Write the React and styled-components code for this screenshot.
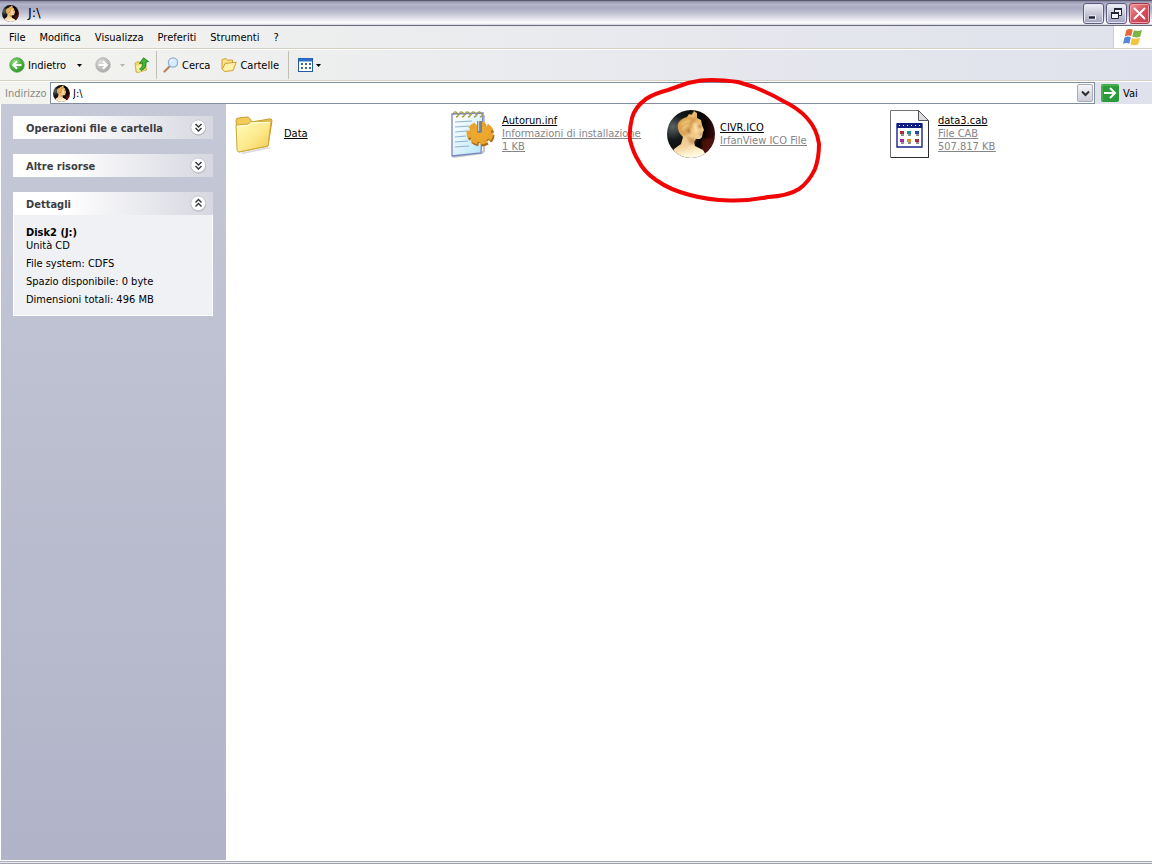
import React, { useId } from "react";
import styled, { createGlobalStyle } from "styled-components";

const GlobalStyle = createGlobalStyle`
  * { box-sizing: border-box; }
  body {
    margin: 0;
    background: #fff;
    color: #000;
    font-family: "DejaVu Sans Condensed", "Liberation Sans", sans-serif;
    font-size: 11px;
    line-height: 13px;
  }
  button, input {
    font: inherit;
    color: inherit;
    border: 0;
    margin: 0;
    padding: 0;
    background: none;
  }
  svg { display: block; flex: none; }
  h1, h2, p, dl, dd { margin: 0; }
`;

const Window = styled.div`
  display: flex;
  flex-direction: column;
  min-height: 100vh;
  overflow: hidden;
`;

const TitleBar = styled.header`
  display: flex;
  align-items: center;
  gap: 9px;
  height: 26px;
  padding: 0 2px;
  border-top: 1px solid #5c5870;
  border-bottom: 1px solid #6d6a80;
  background: linear-gradient(#8c8ba6 0, #b4b4ca 3px, #a9a9c2 7px, #c6c6d6 13px, #f2f2f6 20px, #fff 22px, #d0d0dc 24px);
`;

const WindowTitle = styled.h1`
  flex: 1;
  font-family: "DejaVu Sans", sans-serif;
  font-size: 13px;
  font-weight: 400;
  line-height: 16px;
`;

const WindowButtons = styled.div`
  display: flex;
  gap: 2px;
`;

const WindowButton = styled.button`
  display: grid;
  place-items: center;
  width: 21px;
  height: 21px;
  border: 1px solid ${(p) => (p.$close ? "#a33a4c" : "#5d5c80")};
  border-radius: 3px;
  box-shadow: inset 0 0 0 1px ${(p) => (p.$close ? "#f0a0a8" : "#e4e4f0")};
  background: ${(p) =>
    p.$close
      ? "linear-gradient(135deg, #ec9a9e, #d8525c 50%, #c03c4c)"
      : "linear-gradient(#f0f0f6, #c4c4d6 55%, #a2a2be)"};
`;

const Bar = styled.div`
  display: flex;
  align-items: center;
  background: linear-gradient(90deg, #f3f3ef, #e9eaee 50%, #dfe1ec);
`;

const MenuBar = styled(Bar)`
  height: 23px;
  padding-left: 2px;
  border-bottom: 1px solid #d5d2c3;
`;

const MenuItem = styled.button`
  height: 22px;
  padding: 0 7px;
`;

const Brand = styled.div`
  display: grid;
  place-items: center;
  width: 39px;
  height: 22px;
  margin-left: auto;
  border-left: 1px solid #d5d2c3;
  background: #fff;
`;

const ToolBar = styled(Bar)`
  height: 32px;
  padding-left: 9px;
  border-top: 1px solid #fff;
  border-bottom: 1px solid #d5d2c3;
`;

const ToolButton = styled.button`
  display: flex;
  align-items: center;
  gap: 3px;
  height: 24px;
  margin-right: ${(p) => p.$after || 0}px;
`;

const Divider = styled.div`
  width: 1px;
  height: 28px;
  margin: 0 ${(p) => p.$gap}px;
  background: #c2c0b6;
`;

const AddressBar = styled(Bar)`
  height: 23px;
  padding-left: 5px;
  border-top: 1px solid #fff;
`;

const AddressLabel = styled.label`
  width: 45px;
  color: #8a8a88;
`;

const Combo = styled.div`
  display: flex;
  flex: 1;
  align-items: center;
  height: 22px;
  padding: 1px 1px 1px 2px;
  border: 1px solid #7f8fa0;
  background: #fff;
`;

const AddressInput = styled.input`
  flex: 1;
  min-width: 0;
  height: 18px;
  padding: 1px 3px 0;
  outline: 0;
`;

const DropButton = styled.button`
  display: grid;
  place-items: center;
  width: 16px;
  height: 18px;
  border: 1px solid #a9aabc;
  border-radius: 2px;
  background: linear-gradient(#f4f4f8, #cccdd8);
`;

const GoButton = styled.button`
  display: flex;
  align-items: center;
  gap: 4px;
  width: 57px;
  height: 22px;
  padding-left: 6px;
`;

const Body = styled.div`
  display: flex;
  flex: 1;
  margin-left: 1px;
`;

const Sidebar = styled.aside`
  display: flex;
  flex-direction: column;
  gap: 15px;
  width: 225px;
  padding: 12px 13px 12px 12px;
  background: linear-gradient(#c5c8d6, #b1b3c8);
`;

const PanelHeader = styled.button`
  display: flex;
  align-items: center;
  justify-content: space-between;
  width: 100%;
  height: 23px;
  padding: 2px 6px 0 13px;
  color: #3c3d42;
  font-weight: 700;
  background: linear-gradient(90deg, #fff 25%, #d6d7e0);
`;

const PanelBody = styled.div`
  height: 101px;
  padding: 11px 12px 0;
  border: 1px solid #fff;
  border-top: 0;
  background: #eff1f5;
`;

const Detail = styled.p`
  margin-bottom: ${(p) => (p.$tight ? 0 : 5)}px;
  font-weight: ${(p) => (p.$strong ? 700 : 400)};
`;

const Files = styled.main`
  display: grid;
  flex: 1;
  grid-template-columns: repeat(auto-fill, 218px);
  align-content: start;
  padding: 6px 0 6px 5px;
  background: #fff;
`;

const FileItem = styled.div`
  position: relative;
  display: flex;
  align-items: center;
  gap: 5px;
  height: 48px;
`;

const FileText = styled.a`
  padding-bottom: 1px;
  color: #000;
  white-space: nowrap;
`;

const FileNote = styled.span`
  display: block;
  color: #85858a;
  text-decoration: underline;
`;

const Marker = styled.svg`
  position: absolute;
  z-index: 2;
  top: -34px;
  left: -41px;
  pointer-events: none;
`;

const StatusEdge = styled.footer`
  height: 4px;
  border-top: 1px solid #fff;
  border-bottom: 1px solid #9fa1ad;
  background: linear-gradient(#a9aabb 50%, #eeeef2 50%);
`;

function Portrait({ size }) {
  const id = useId();
  return (
    <svg width={size} height={size} viewBox="0 0 48 48" aria-hidden="true">
      <defs>
        <radialGradient id={id + "b"} cx=".12" cy=".35" r=".95">
          <stop offset="0" stopColor="#5a6466" />
          <stop offset=".28" stopColor="#15191a" />
          <stop offset=".7" stopColor="#060303" />
          <stop offset="1" stopColor="#4e0f0d" />
        </radialGradient>
        <linearGradient id={id + "s"} x1=".3" x2=".5" y1="0" y2="1">
          <stop offset="0" stopColor="#dfa650" />
          <stop offset=".4" stopColor="#f0c57f" />
          <stop offset=".7" stopColor="#f2d09a" />
          <stop offset=".88" stopColor="#fff3d2" />
          <stop offset="1" stopColor="#fffdf0" />
        </linearGradient>
        <filter id={id + "f"} x="-10%" y="-10%" width="120%" height="120%">
          <feGaussianBlur stdDeviation=".9" />
        </filter>
        <clipPath id={id + "c"}><circle cx="24" cy="24" r="24" /></clipPath>
      </defs>
      <g clipPath={`url(#${id}c)`}>
        <rect width="48" height="48" fill={`url(#${id}b)`} />
        <path d="M34 30Q45 26 48 30L44 42 36 42Z" fill="#5c1210" opacity=".7" filter={`url(#${id}f)`} />
        <path d="M2 50 7 39 14 34 16 27Q10 21 11 14Q13 9 20 7L22 4 25 5 27 1 30 3 30 8 34 10 35 15 37 20 36 22 35 27 33 29 29 29 27 32 28 36 36 40 42 50Z" fill={`url(#${id}s)`} />
        <g filter={`url(#${id}f)`}>
          <path d="M11 14Q13 9 21 8L29 7Q31 11 26 13L25 18 21 20 20 25 16 26Q9 20 11 14Z" fill="#c98a38" opacity=".6" />
          <path d="M14 15q4-4 9-4M16 20q1-4 6-5M25 7l2-4" fill="none" stroke="#f6d080" strokeWidth="2" />
          <path d="M20 26Q24 29 29 29L27 34 23 34Z" fill="#b9793a" opacity=".6" />
          <path d="M31 17l3-1M33 24h2M22 19q-1 3 1 4" fill="none" stroke="#8f5425" strokeWidth="1.6" />
          <path d="M27 14q3 3 2 9" fill="none" stroke="#ffe2a8" strokeWidth="3" />
        </g>
      </g>
    </svg>
  );
}

function ArrowDisc({ back }) {
  const id = useId();
  return (
    <svg width="16" height="16" viewBox="0 0 16 16" aria-hidden="true">
      <defs>
        <radialGradient id={id} cx=".35" cy=".3" r=".8">
          <stop offset="0" stopColor={back ? "#8fdc7c" : "#dededc"} />
          <stop offset="1" stopColor={back ? "#1e8f1c" : "#a4a5a5"} />
        </radialGradient>
      </defs>
      <circle cx="8" cy="8" r="7.2" fill={`url(#${id})`} stroke={back ? "#43a03c" : "#aaa"} strokeWidth=".8" />
      <path d={back ? "M12.5 8H4.5M8 4.2 4.2 8 8 11.8" : "M3.5 8h8M8 4.2 11.8 8 8 11.8"} fill="none" stroke="#fff" strokeWidth="2" />
    </svg>
  );
}

const Caret = ({ color = "#000" }) => (
  <svg width="5" height="3" viewBox="0 0 5 3" aria-hidden="true">
    <path d="M0 0h5L2.5 3Z" fill={color} />
  </svg>
);

const UpFolder = () => (
  <svg width="16" height="16" viewBox="0 0 16 16" aria-hidden="true">
    <path d="M1 6 4 4.5 6 5.5 11 4 12.5 13 4 15.5 2 15Z" fill="#f3d866" stroke="#c9a738" strokeWidth=".8" />
    <path d="M2 9 9 7 10.5 13 4 15Z" fill="#fdf3a4" />
    <path d="M5.5 12Q9 11 8.5 6L5.5 6.5 9.5 .8 14.5 4.5 12 5.2Q12.5 11.5 7.5 13.5Z" fill="#43b634" stroke="#17701a" strokeWidth=".8" />
  </svg>
);

const Magnifier = () => (
  <svg width="16" height="16" viewBox="0 0 16 16" aria-hidden="true">
    <path d="M6.5 9.5 1.5 14.5" stroke="#b9805a" strokeWidth="2.2" strokeLinecap="round" />
    <circle cx="10" cy="5.5" r="4.6" fill="#d6ecfb" stroke="#8fb0d4" strokeWidth="1.3" />
    <path d="M7.5 5q.5-2 2.5-2.3" fill="none" stroke="#fff" strokeWidth="1.3" />
  </svg>
);

const OpenFolder = () => (
  <svg width="16" height="16" viewBox="0 0 16 16" aria-hidden="true">
    <path d="M1 12V2.5L5 1.5 6.5 3.2 11.5 3V6" fill="#fbe28a" stroke="#d1a032" />
    <path d="M1.2 12.5 4 6.5 15.2 5.2 12 13.5 4 14.5Z" fill="#fff2a8" stroke="#d1a032" />
  </svg>
);

const ViewsIcon = () => (
  <svg width="15" height="14" viewBox="0 0 15 14" aria-hidden="true">
    <rect x=".5" y=".5" width="14" height="13" fill="#fff" stroke="#2459a8" />
    <path d="M1 2h13" stroke="#2f6fc9" strokeWidth="3" />
    <path d="M3 6h2M7 6h2M11 6h2M3 10h2M7 10h2M11 10h2" stroke="#3f6792" strokeWidth="2" />
  </svg>
);

const Flag = () => (
  <svg width="20" height="18" viewBox="0 0 20 18" aria-hidden="true">
    <path d="M3.3 2.2Q6-.1 9.7 1.7L8.2 8.1Q5 6.5 1.7 8.5Z" fill="#e4683a" />
    <path d="M10.9 2.2Q14.5 4 19 1.8L17.3 8.4Q13.5 10.3 9.3 8.6Z" fill="#7bb642" />
    <path d="M1.4 9.7Q4.6 7.7 7.9 9.4L6.3 15.8Q3 14.2 0 16Z" fill="#5288d6" />
    <path d="M9 9.9Q13 11.6 17 9.7L15.3 16.2Q11.5 18.2 7.4 16.3Z" fill="#f5c33c" />
  </svg>
);

function Chevrons({ up }) {
  return (
    <svg width="17" height="19" viewBox="0 0 17 19" aria-hidden="true">
      <circle cx="8.5" cy="9" r="7.5" fill="#a9aab8" />
      <circle cx="8.2" cy="8.3" r="7.4" fill="#fff" stroke="#bdbecb" strokeWidth=".8" />
      <path
        d={up ? "M5.5 7.5l3-3 3 3M5.5 11.5l3-3 3 3" : "M5.5 5l3 3 3-3M5.5 9l3 3 3-3"}
        fill="none"
        stroke="#34363f"
        strokeWidth="1.4"
      />
    </svg>
  );
}

const FolderIcon = () => (
  <svg width="48" height="48" viewBox="0 0 48 48" aria-hidden="true">
    <defs>
      <linearGradient id="folderFront" x1="0" y1="0" x2="1" y2="1">
        <stop offset="0" stopColor="#fffcb8" />
        <stop offset=".5" stopColor="#fdeb90" />
        <stop offset="1" stopColor="#f3c94e" />
      </linearGradient>
    </defs>
    <path d="M9 43 36 37 40 38 12 44Z" fill="#b9b9b9" opacity=".5" />
    <path d="M5 10Q5 8 8 8L16 7Q18 7 19 9L21 12 38 9Q41 8 41 11L37 36 8 42Z" fill="#f0cc58" stroke="#c49b2c" />
    <path d="M5 15 17 14 20 11.5 40 11 37 36 8 42Q6 42 6 39Z" fill="url(#folderFront)" stroke="#cfa83c" />
    <path d="M6 16.5 17.5 15.5 20.5 13 38.500 12.500" fill="none" stroke="#fffde0" />
  </svg>
);

const SetupIcon = () => (
  <svg width="48" height="48" viewBox="0 0 48 48" aria-hidden="true">
    <defs>
      <linearGradient id="notePaper" x1="0" y1="0" x2="1" y2="1">
        <stop offset=".1" stopColor="#fff" />
        <stop offset="1" stopColor="#b5e4f8" />
      </linearGradient>
    </defs>
    <path d="M4 47 33 43 35 41 35 5" fill="none" stroke="#999cac" strokeWidth="2" opacity=".6" />
    <path d="M3 4 34 3 32 43 3 46Z" fill="url(#notePaper)" stroke="#7884c0" strokeWidth="1.3" />
    <path d="M6 12l17-1M6 17l14-1M6 22l12-1M6 27l11-1M6 32l13-1M6 37l14-1" stroke="#8bb4d5" />
    <path d="M4 5q1-5 4-2t-1 4M10 5q1-5 4-2t-1 4M16 5q1-5 4-2t-1 4M22 5q1-5 4-2t-1 4M28 5q1-5 4-2t-1 4" fill="none" stroke="#a39b43" strokeWidth="1.3" />
    <ellipse cx="32" cy="25" rx="10" ry="8" fill="#a86b14" />
    <ellipse cx="32" cy="25" rx="11" ry="9" fill="none" stroke="#a86b14" strokeWidth="5" strokeDasharray="6.5 2.5" />
    <ellipse cx="31" cy="23" rx="11" ry="9" fill="#eda92f" />
    <ellipse cx="31" cy="23" rx="11" ry="9" fill="none" stroke="#e9a42d" strokeWidth="5" strokeDasharray="6.5 2.5" />
    <path d="M28 11v11q3 2 5 0V11Z" fill="#76838c" />
    <path d="M29.5 11v10" stroke="#c6d0d5" strokeWidth="1.3" />
  </svg>
);

const CabIcon = () => (
  <svg width="48" height="48" viewBox="0 0 48 48" aria-hidden="true">
    <path d="M5.5.5h28l10 10v37h-38Z" fill="#fff" stroke="#73737a" />
    <path d="M6 47.5h37.5V11" fill="none" stroke="#2c2c30" />
    <path d="M33.5.5v10h10Z" fill="#ddd" stroke="#55555c" />
    <path d="M12 14h25v23H12Z" fill="#fff" stroke="#16238a" strokeWidth="1.4" />
    <path d="M12 13h25v5H12Z" fill="#101c86" />
    <path d="M14 15.5h22" stroke="#fff" strokeDasharray="1 3" />
    <path d="M15 21h4v3h-4zM30 29h4v3h-4z" fill="#b32a35" />
    <path d="M22 21h4v3h-4z" fill="#1a8f9c" />
    <path d="M30 21h4v3h-4z" fill="#2748b4" />
    <path d="M15 29h4v3h-4z" fill="#a729a2" />
    <path d="M22 29h4v3h-4z" fill="#d8902c" />
    <path d="M16 25h3M23 25h3M31 25h3M16 33h3M23 33h3M31 33h3" stroke="#222" />
  </svg>
);

const menus = ["File", "Modifica", "Visualizza", "Preferiti", "Strumenti", "?"];

const files = [
  { name: "Data", icon: <FolderIcon />, notes: [] },
  { name: "Autorun.inf", icon: <SetupIcon />, notes: ["Informazioni di installazione", "1 KB"] },
  { name: "CIVR.ICO", icon: <Portrait size={48} />, notes: ["IrfanView ICO File"], marked: true },
  { name: "data3.cab", icon: <CabIcon />, notes: ["File CAB", "507.817 KB"] },
];

export default function App() {
  return (
    <Window>
      <GlobalStyle />
      <TitleBar>
        <Portrait size={17} />
        <WindowTitle>J:\</WindowTitle>
        <WindowButtons>
          <WindowButton aria-label="Riduci a icona">
            <svg width="15" height="15" viewBox="0 0 15 15"><path d="M3 11.5h7" stroke="#fff" strokeWidth="4" /><path d="M3 11.5h6" stroke="#222238" strokeWidth="2.5" /></svg>
          </WindowButton>
          <WindowButton aria-label="Ripristina">
            <svg width="15" height="15" viewBox="0 0 15 15" fill="#f4f4fa" stroke="#25253a"><path d="M5.5 2.5h7v7h-7z" /><path d="M5 3h8" strokeWidth="2" /><path d="M2.5 6.5h7v6h-7z" /><path d="M2 7h8" strokeWidth="2" /></svg>
          </WindowButton>
          <WindowButton $close aria-label="Chiudi">
            <svg width="15" height="15" viewBox="0 0 15 15"><path d="M2.5 2.5l10 10M12.5 2.5l-10 10" stroke="#fff" strokeWidth="2" strokeLinecap="round" /></svg>
          </WindowButton>
        </WindowButtons>
      </TitleBar>

      <MenuBar as="nav">
        {menus.map((m) => <MenuItem key={m}>{m}</MenuItem>)}
        <Brand><Flag /></Brand>
      </MenuBar>

      <ToolBar>
        <ToolButton $after={11}><ArrowDisc back />Indietro</ToolButton>
        <ToolButton $after={13} aria-label="Cronologia indietro"><Caret /></ToolButton>
        <ToolButton $after={9} aria-label="Avanti"><ArrowDisc /></ToolButton>
        <ToolButton $after={9} aria-label="Cronologia avanti"><Caret color="#b4b4b0" /></ToolButton>
        <ToolButton aria-label="Livello superiore"><UpFolder /></ToolButton>
        <Divider $gap={6} />
        <ToolButton $after={11}><Magnifier />Cerca</ToolButton>
        <ToolButton><OpenFolder />Cartelle</ToolButton>
        <Divider $gap={9} />
        <ToolButton aria-label="Visualizza"><ViewsIcon /><Caret /></ToolButton>
      </ToolBar>

      <AddressBar>
        <AddressLabel htmlFor="address">Indirizzo</AddressLabel>
        <Combo>
          <Portrait size={17} />
          <AddressInput id="address" defaultValue="J:\" />
          <DropButton aria-label="Mostra indirizzi">
            <svg width="9" height="7" viewBox="0 0 9 7"><path d="M1 1.5 4.5 5 8 1.5" fill="none" stroke="#2c2c34" strokeWidth="2" /></svg>
          </DropButton>
        </Combo>
        <GoButton>
          <svg width="18" height="18" viewBox="0 0 18 18"><rect width="18" height="18" rx="2" fill="#2b9a38" /><path d="M1 17V1h16" fill="none" stroke="#69bf6b" /><path d="M3 9h11M9 4l5 5-5 5" fill="none" stroke="#fff" strokeWidth="2" /></svg>
          Vai
        </GoButton>
      </AddressBar>

      <Body>
        <Sidebar>
          <PanelHeader>Operazioni file e cartella<Chevrons /></PanelHeader>
          <PanelHeader>Altre risorse<Chevrons /></PanelHeader>
          <section>
            <PanelHeader>Dettagli<Chevrons up /></PanelHeader>
            <PanelBody>
              <Detail $tight $strong>Disk2 (J:)</Detail>
              <Detail>Unità CD</Detail>
              <Detail>File system: CDFS</Detail>
              <Detail>Spazio disponibile: 0 byte</Detail>
              <Detail>Dimensioni totali: 496 MB</Detail>
            </PanelBody>
          </section>
        </Sidebar>
        <Files>
          {files.map((f) => (
            <FileItem key={f.name}>
              {f.icon}
              <FileText href="#">
                {f.name}
                {f.notes.map((n) => <FileNote key={n}>{n}</FileNote>)}
              </FileText>
              {f.marked && (
                <Marker width="196" height="128" viewBox="0 0 196 128" aria-hidden="true">
                  <path d="M75 4.5L62 7 42 14Q27 18 20 23Q9 31 6 42Q3 54 4 64Q7 76 12 84Q18 96 30 104Q44 114 64 119Q82 124 104 124.5Q124 125 142 121Q162 120 173 113Q183 106 189 93Q193 82 193 68Q191 53 181 42Q172 32 157 25Q145 18 128 11L112 6Q90 3 75 4.5Z" fill="none" stroke="#f00404" strokeWidth="4" strokeLinejoin="round" />
                </Marker>
              )}
            </FileItem>
          ))}
        </Files>
      </Body>
      <StatusEdge />
    </Window>
  );
}
